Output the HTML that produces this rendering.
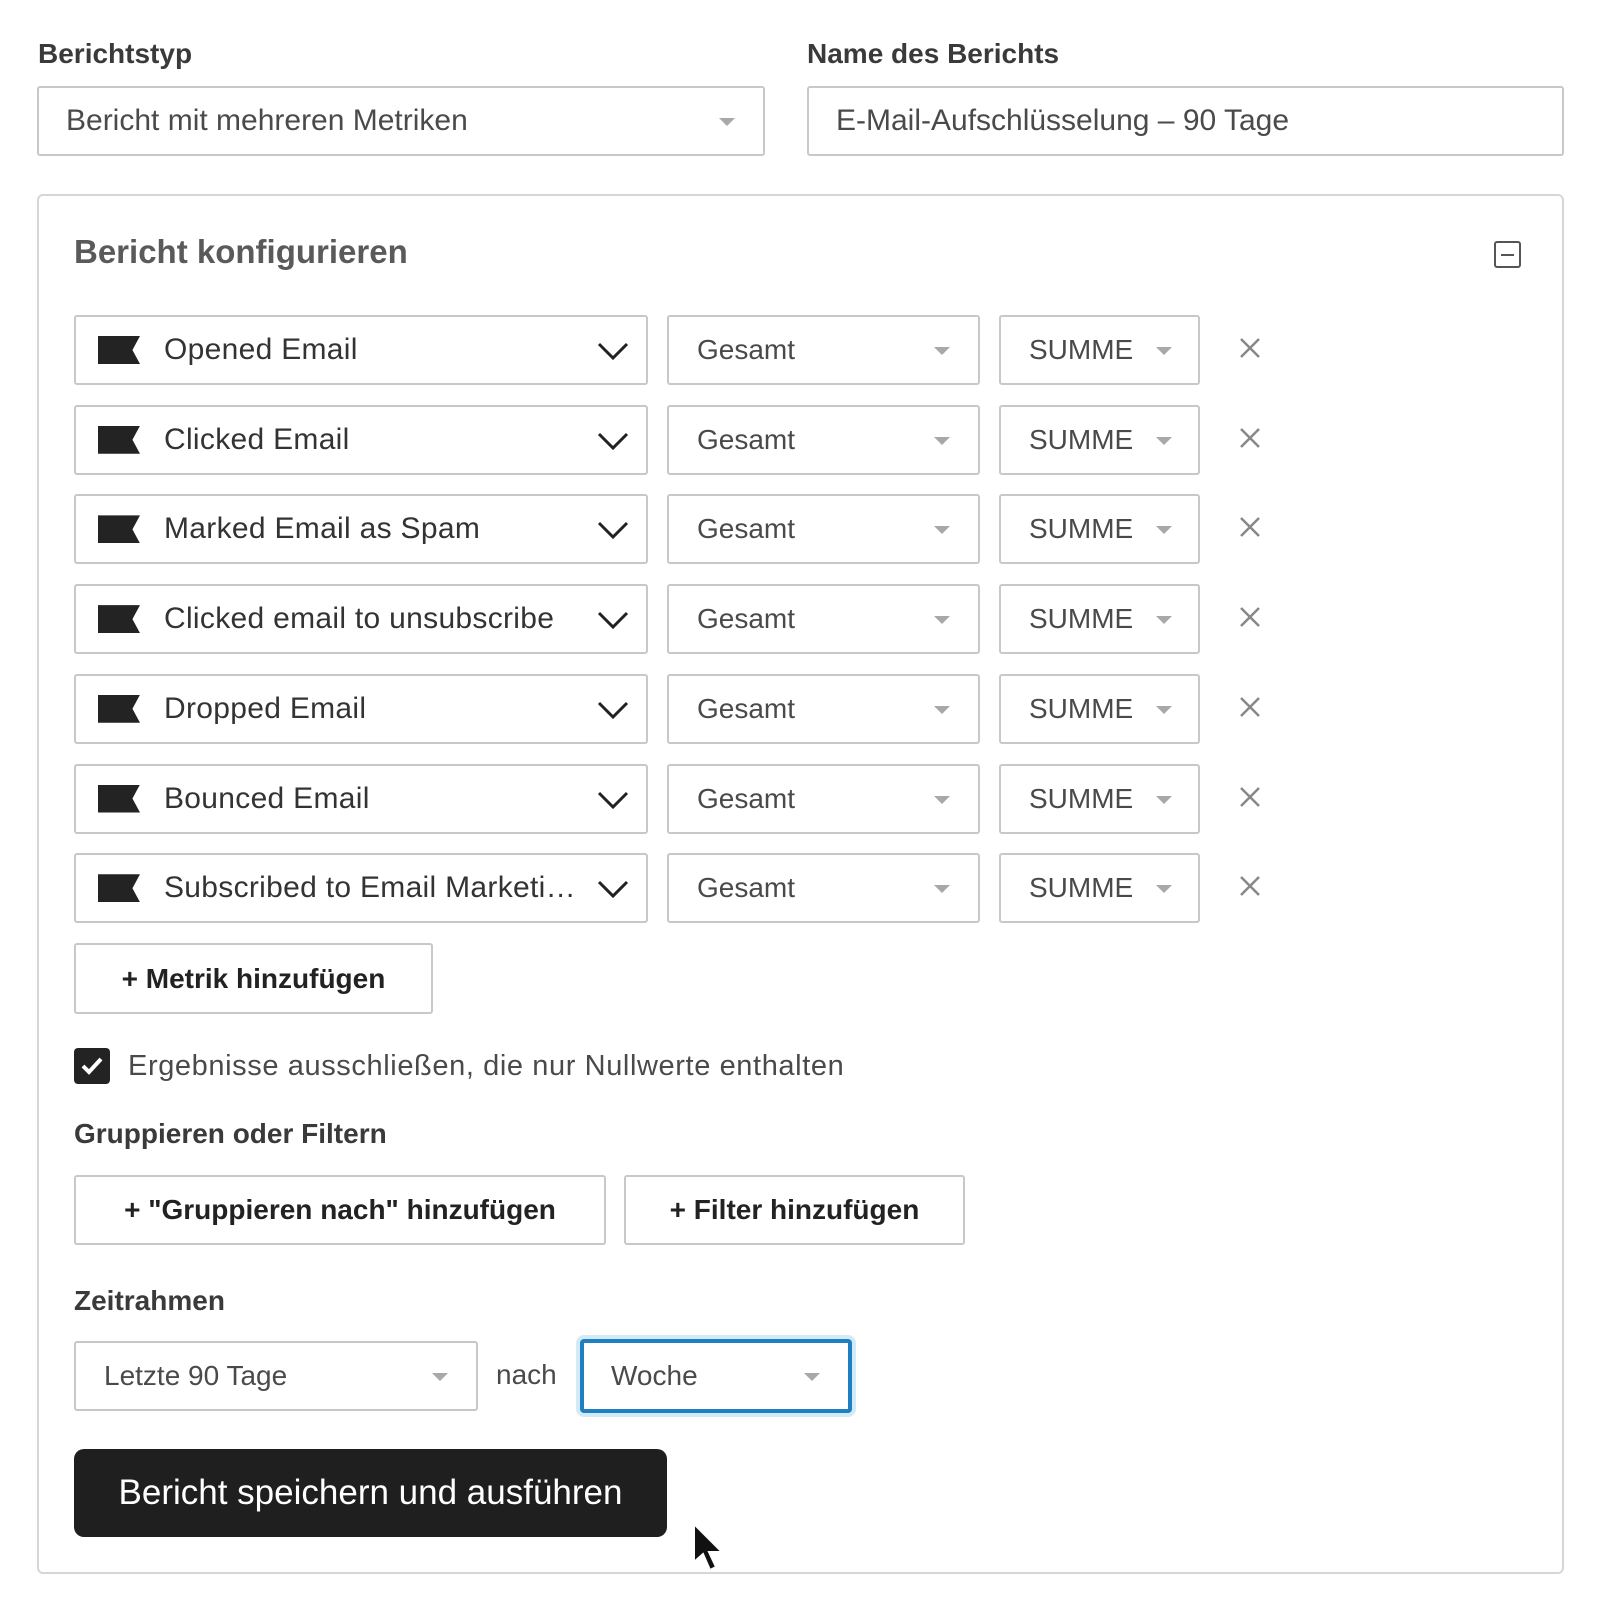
<!DOCTYPE html>
<html><head><meta charset="utf-8"><style>
*{box-sizing:border-box;margin:0;padding:0}
body{width:1600px;height:1611px;background:#fff;font-family:"Liberation Sans",sans-serif;color:#333;position:relative;overflow:hidden}
.a{position:absolute}
.lbl{font-weight:bold;font-size:28px;color:#3a3a3a}
.box{position:absolute;border:2px solid #c8c8c8;border-radius:3px;background:#fff}
.txt{position:absolute;top:50%;transform:translateY(-50%);font-size:28px;color:#4a4a4a;white-space:nowrap}
.tri{position:absolute;top:50%;margin-top:-3px;width:0;height:0;border-left:8px solid transparent;border-right:8px solid transparent;border-top:8px solid #a8a8a8}
.flag{position:absolute;left:22px;top:50%;margin-top:-14px;width:42px;height:28px;background:#232323;clip-path:polygon(0 0,100% 0,82% 50%,100% 100%,0 100%)}
.chev{position:absolute;right:16px;top:50%;margin-top:-14px}
.btn{position:absolute;border:2px solid #c8c8c8;border-radius:3px;background:#fff;font-weight:bold;font-size:28px;color:#222;display:flex;align-items:center;justify-content:center}
</style></head><body>
<div class="a lbl" style="left:38px;top:38px">Berichtstyp</div>
<div class="a lbl" style="left:807px;top:38px">Name des Berichts</div>
<div class="box" style="left:37px;top:86px;width:728px;height:70px"><span class="txt" style="left:27px;font-size:30px">Bericht mit mehreren Metriken</span><span class="tri" style="right:28px"></span></div>
<div class="box" style="left:807px;top:86px;width:757px;height:70px"><span class="txt" style="left:27px;font-size:30px">E-Mail-Aufschlüsselung – 90 Tage</span></div>

<div class="box" style="left:37px;top:194px;width:1527px;height:1380px;border-radius:6px;border-color:#d6d6d6"></div>
<div class="a" style="left:74px;top:233px;font-size:33px;font-weight:bold;color:#5a5a5a">Bericht konfigurieren</div>
<div class="a" style="left:1494px;top:241px;width:27px;height:27px;border:2px solid #555;border-radius:3px"><div style="position:absolute;left:5px;right:5px;top:10.5px;height:2px;background:#555"></div></div>

<div id="rows"></div>
<script>
var names=["Opened Email","Clicked Email","Marked Email as Spam","Clicked email to unsubscribe","Dropped Email","Bounced Email","Subscribed to Email Marketi…"];
var h="";
for(var i=0;i<7;i++){var y=315+i*89.7;
h+='<div class="box" style="left:74px;top:'+y+'px;width:574px;height:70px"><span class="flag"></span><span class="txt" style="left:88px;font-size:30px;color:#333;letter-spacing:0.3px">'+names[i]+'</span><svg class="chev" width="34" height="28" viewBox="0 0 34 28"><path d="M3 8 L17 22 L31 8" fill="none" stroke="#222" stroke-width="3"/></svg></div>';
h+='<div class="box" style="left:667px;top:'+y+'px;width:313px;height:70px"><span class="txt" style="left:28px">Gesamt</span><span class="tri" style="right:28px"></span></div>';
h+='<div class="box" style="left:999px;top:'+y+'px;width:201px;height:70px"><span class="txt" style="left:28px">SUMME</span><span class="tri" style="right:26px"></span></div>';
h+='<svg class="a" style="left:1238px;top:'+(y+21)+'px" width="24" height="24" viewBox="0 0 24 24"><path d="M3 3L21 21M21 3L3 21" stroke="#888" stroke-width="2.5"/></svg>';}
document.getElementById("rows").innerHTML=h;
</script>

<div class="btn" style="left:74px;top:943px;width:359px;height:71px">+ Metrik hinzufügen</div>
<div class="a" style="left:74px;top:1048px;width:36px;height:36px;background:#232323;border-radius:4px"><svg width="36" height="36" viewBox="0 0 36 36"><path d="M9 18 L15 24 L27 11" fill="none" stroke="#fff" stroke-width="4"/></svg></div>
<div class="a" style="left:128px;top:1050px;font-size:29px;color:#4a4a4a;letter-spacing:0.6px">Ergebnisse ausschließen, die nur Nullwerte enthalten</div>
<div class="a lbl" style="left:74px;top:1118px">Gruppieren oder Filtern</div>
<div class="btn" style="left:74px;top:1175px;width:532px;height:70px">+ "Gruppieren nach" hinzufügen</div>
<div class="btn" style="left:624px;top:1175px;width:341px;height:70px">+ Filter hinzufügen</div>
<div class="a lbl" style="left:74px;top:1285px">Zeitrahmen</div>
<div class="box" style="left:74px;top:1341px;width:404px;height:70px"><span class="txt" style="left:28px">Letzte 90 Tage</span><span class="tri" style="right:28px"></span></div>
<div class="a" style="left:496px;top:1359px;font-size:28px;color:#4a4a4a">nach</div>
<div class="a" style="left:576px;top:1335px;width:280px;height:82px;border-radius:8px;background:#d4ebf7"></div>
<div class="box" style="left:580px;top:1339px;width:272px;height:74px;border:4px solid #1f7fc0;border-radius:4px"><span class="txt" style="left:27px">Woche</span><span class="tri" style="right:28px"></span></div>
<div class="a" style="left:74px;top:1449px;width:593px;height:88px;background:#1f1f1f;border-radius:10px;color:#fff;font-size:35px;display:flex;align-items:center;justify-content:center">Bericht speichern und ausführen</div>
<svg class="a" style="left:692px;top:1522px" width="40" height="52" viewBox="0 0 40 52"><path d="M2 2 L2 40 L11 32 L18 48 L24 45 L17 30 L30 30 Z" fill="#111" stroke="#fff" stroke-width="2"/></svg>
</body></html>
